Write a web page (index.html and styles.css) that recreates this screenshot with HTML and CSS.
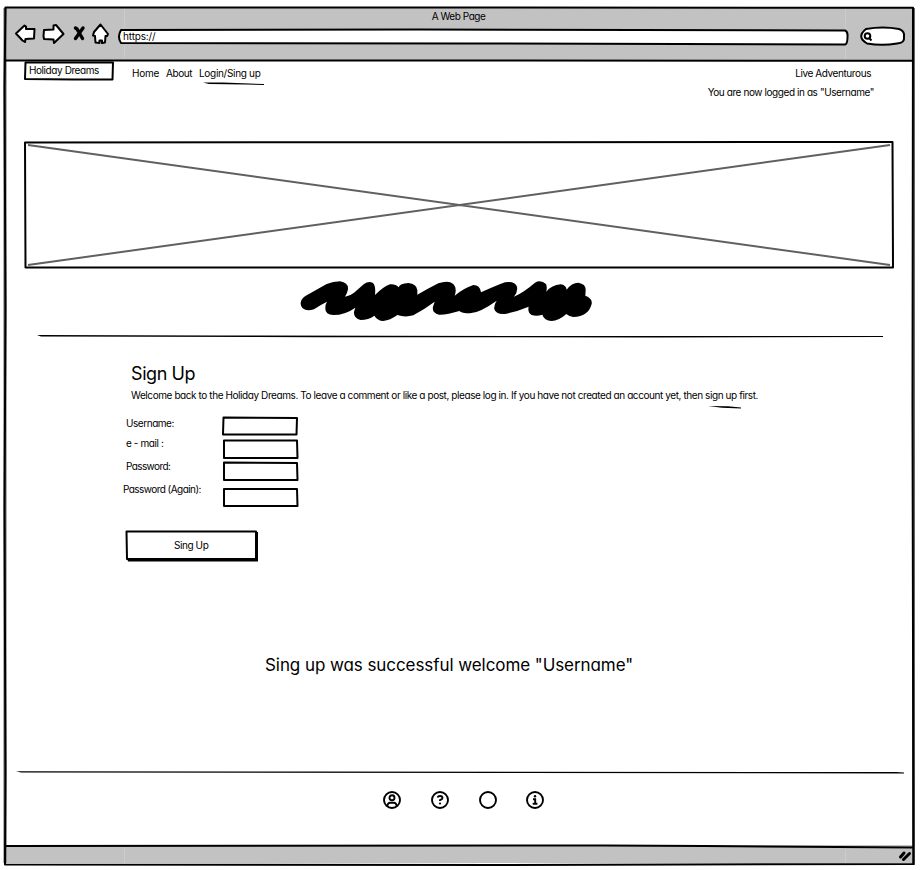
FILE: index.html
```html
<!DOCTYPE html>
<html lang="en">
<head>
<meta charset="utf-8">
<title>Holiday Dreams</title>
<link rel="stylesheet" href="styles.css">
</head>
<body>
<div class="window">
  <header class="chrome">
    <div class="title">A Web Page</div>
    <div class="toolbar">
      <svg class="tools" viewBox="0 0 96 26" width="96" height="26">
        <path class="shape" d="M1 11.500 L9.500 3.500 L11 4.500 V7 H19.500 L19 16.500 L10.500 17 L10 20 L7.500 18.500 Z"/>
        <path class="shape" d="M29 8 L38.500 7.500 V3.500 L41 3 L48.500 12 L39 21 L38.500 17.500 L29 17 L28.500 14 Z"/>
        <path class="cross" d="M60.500 6 L62 7 L67.500 16.500 M68 6 L60.500 16.500"/>
        <path class="shape" d="M85.500 2.500 L93 12 L92 14 H90.500 L90 20.500 L87 21 V18.500 H84.500 V21 L80.500 20.500 L80 14 L78 13.500 L79 10 Z"/>
      </svg>
      <div class="address">
        <svg class="sketch" viewBox="0 0 732 18"><path class="shape" d="M3 2 L300 1.500 L727 2.500 Q730 3.500 729.500 9 Q729.500 16 727 16.500 L350 15.500 L3 15 Q-1 9 3 2Z"/></svg>
        <span>https://</span>
      </div>
      <svg class="search" viewBox="0 0 46 20" width="46" height="20">
        <path class="shape" d="M6 3 Q23 0 39 3 Q45 5 44 11 Q45 17 37 17.500 Q22 20 7 17.500 Q-4 11 6 3Z"/>
        <circle class="shape" cx="7.500" cy="10" r="2.800"/><path class="shape" d="M9 12 L11.500 14.500"/>
      </svg>
    </div>
  </header>

  <nav class="nav">
    <div class="brand">
      <svg class="sketch" viewBox="0 0 90 20"><path class="line" d="M1.500 1.500 L89 1.500 L88.500 18.500 L50 18.500 L1 18 Z"/></svg>
      <span class="t-brand">Holiday Dreams</span>
    </div>
    <span class="t-home">Home</span>
    <span class="t-about">About</span>
    <span class="login"><span class="t-login">Login/Sing up</span>
      <svg class="underline" viewBox="0 0 62 4" width="62" height="4"><path d="M0 .5 L20 .6 L61 2 V3 L42 2.600 L6 2 Z"/></svg>
    </span>
    <div class="status">
      <div class="t-live">Live Adventurous</div>
      <div class="t-user">You are now logged in as "Username"</div>
    </div>
  </nav>

  <main>
    <svg class="banner" viewBox="0 0 870 128" width="870" height="128">
      <path class="diag" d="M4 4 L866 124 M4 124 L866 4"/>
      <path class="line" d="M1 1.500 L868.500 1 L869 126.500 L450 126.500 L1.500 126.500 Z"/>
    </svg>
    <svg class="scribble" viewBox="30 33 876 126" width="292" height="42">
      <path d="M32 98 Q34 85 50 76 L110 42 Q130 34 150 34 Q176 38 174 58 Q172 70 165 80 Q180 78 192 68 L222 42 Q235 32 248 38 Q258 45 255 75 Q280 50 300 43 Q318 42 326 52 Q330 40 355 39 Q380 42 382 60 L382 74 Q410 58 445 40 Q475 30 490 42 Q502 55 494 77 Q520 55 550 45 Q570 45 573 67 Q620 46 645 37 Q675 32 681 50 Q684 65 672 80 Q700 68 735 38 Q752 28 768 42 Q772 50 769 65 Q785 45 812 43 Q828 45 830 59 Q845 38 865 38 Q888 42 887 60 L886 77 Q908 85 905 102 Q895 140 850 141 Q838 140 829 132 Q805 153 785 153 Q762 152 757 134 Q740 140 725 135 Q712 128 716 110 Q680 125 645 132 Q618 134 613 118 Q611 105 620 92 Q570 128 540 130 Q515 130 508 123 Q470 135 447 134 Q425 128 429 110 L434 95 Q400 120 370 136 Q345 143 322 135 Q300 151 280 153 Q262 152 253 137 Q235 150 212 150 Q190 145 192 125 L196 113 Q165 135 130 135 Q105 134 106 115 Q106 102 111 95 Q90 105 72 118 Q50 125 38 115 Q31 108 32 98Z"/>
    </svg>
    <svg class="rule top" viewBox="0 0 846 4" width="846" height="4"><path d="M0 0 L180 .4 L500 1 L846 1 V2 L620 2.500 L280 2.200 L4 1.400 Z"/></svg>

    <section class="signup">
      <h1>Sign Up</h1>
      <p class="welcome">Welcome back to the Holiday Dreams. To leave a comment or like a post, please log in. If you have not created an account yet, then sign up first.
        <svg class="underline" viewBox="0 0 34 4" width="34" height="4"><path d="M0 0 L20 .2 L33 1.500 V2.500 L14 1.800 Z"/></svg>
      </p>
      <form class="fields">
        <label class="t-name">Username:</label>
        <div class="field"><svg class="sketch" viewBox="0 0 76 20"><path class="line" d="M1.500 1.500 L75 2 L74.500 18.500 L1 18.500 Z"/></svg></div>
        <label class="t-mail">e - mail :</label>
        <div class="field"><svg class="sketch" viewBox="0 0 76 20"><path class="line" d="M2 1.500 L75 1.500 L75.500 19 L2 19 Z"/></svg></div>
        <label class="t-pass">Password:</label>
        <div class="field"><svg class="sketch" viewBox="0 0 76 20"><path class="line" d="M2 1.500 L75 2 L75.500 19 L2 19 Z"/></svg></div>
        <label class="t-again">Password (Again):</label>
        <div class="field"><svg class="sketch" viewBox="0 0 76 20"><path class="line" d="M2 2 L75 2 L75.500 19 L2 19 Z"/></svg></div>
      </form>
      <div class="button">
        <svg class="sketch" viewBox="0 0 134 32"><path d="M2 28 H130 V2 L133 2 L133 31.500 L3 31.500 Z"/><path class="shape" d="M1.500 1.500 L131 1.500 L131 29 L2 29 Z"/></svg>
        <span class="t-button">Sing Up</span>
      </div>
    </section>

    <p class="success">Sing up was successful welcome "Username"</p>
  </main>

  <footer>
    <svg class="rule" viewBox="0 0 888 4" width="888" height="4"><path d="M0 .3 L300 .5 L880 1 L888 1.500 V2.500 L500 2 L5 1.500 Z"/></svg>
    <div class="icons">
      <svg viewBox="0 0 20 20" width="20" height="20"><circle class="icon" cx="10" cy="10" r="8"/><circle class="icon" cx="10" cy="7.700" r="2.500"/><path class="icon" d="M5.200 16 Q6 12.800 8 12.800 H12 Q14 12.800 14.800 16"/></svg>
      <svg viewBox="0 0 20 20" width="20" height="20"><circle class="icon" cx="10" cy="10" r="8"/><path class="icon" d="M7.500 7.500 Q8 6 10 6 Q12.500 6 12.500 8 Q12.500 9.200 10 10.200 V11"/><circle cx="10" cy="13.500" r="1.100"/></svg>
      <svg viewBox="0 0 20 20" width="20" height="20"><circle class="icon" cx="10" cy="10" r="8"/></svg>
      <svg class="info" viewBox="0 0 20 20" width="20" height="20"><circle class="icon" cx="10" cy="10" r="8"/><circle cx="10" cy="6.300" r="1.200"/><path class="icon" d="M8 9.300 H10.200 V13.500 M7.700 13.800 H12.400"/></svg>
    </div>
    <div class="bottom">
      <svg viewBox="0 0 14 12" width="14" height="12"><path class="grip" d="M2.500 7 L6 3 M5.500 9.500 L11.500 3.500"/></svg>
    </div>
  </footer>

  <svg class="frame" viewBox="0 0 912 860" width="912" height="860">
    <path class="soft" d="M1 1 V856 M909.500 1 V858"/>
    <path class="line" d="M1.500 .5 L500 .5 L909 .7 L908.500 400 L909.500 857 L500 858 L1 857.500 L1.500 766 L.5 500 L1.500 300 L.5 80 Z M1 53.500 L450 53.500 L909 53.700 M1 839 L600 838.500 L700 839 L909 840.500"/>
    <path class="seam" d="M120.500 2 V21 M120.500 39 V52 M841.500 2 V22 M841.500 40 V52 M120.500 841 V856 M841.500 842 V856"/>
  </svg>
</div>
</body>
</html>
```
FILE: styles.css
```css
* { box-sizing: border-box; }
body { margin: 0; background: #fff; color: #000; font: 10px/12px Inter, "Liberation Sans", sans-serif; font-feature-settings: "cv11"; letter-spacing: -0.415px; overflow: hidden; }
h1, p { margin: 0; font-weight: 400; }
svg { display: block; overflow: visible; }
span, label, h1, p, .t-live, .t-user, .title { white-space: nowrap; }

.window { position: relative; width: 912px; height: 860px; margin: 7px 0 0 4px; display: flex; flex-direction: column; }
.frame { position: absolute; inset: 0; pointer-events: none; }
.sketch { position: absolute; inset: 0; width: 100%; height: 100%; }
.shape { fill: #fff; stroke: #000; stroke-width: 2; stroke-linejoin: round; }
.line { fill: none; stroke: #000; stroke-width: 2; stroke-linejoin: round; }
.cross { fill: none; stroke: #000; stroke-width: 3.4; stroke-linecap: round; }
.soft { fill: none; stroke: #666; stroke-width: 3; }
.seam { stroke: #ccc; stroke-width: 1; }
.diag { fill: none; stroke: #606060; stroke-width: 2; }

.chrome { width: 909px; height: 54px; background: #c2c2c2; }
.title { padding-top: 3px; height: 16px; text-align: center; letter-spacing: -0.45px; }
.toolbar { display: flex; align-items: flex-start; padding-left: 11px; }
.tools { flex: none; margin-top: -1px; }
.address { position: relative; width: 732px; height: 18px; margin: 5px 0 0 7px; padding: 2px 0 0 5px; letter-spacing: -0.15px; }
.address span { position: relative; }
.search { margin: 3px 0 0 10px; }

.nav { display: flex; align-items: flex-start; height: 80px; padding: 0 40px 0 20px; }
.brand { position: relative; width: 90px; height: 20px; margin: 0 18px 0 0; padding: 3px 0 0 5px; }
.brand span { position: relative; }
.t-home, .t-about, .login, .status { margin-top: 6px; }
.t-home { width: 34px; letter-spacing: -0.2px; }
.t-about { width: 33px; letter-spacing: -0.4px; }
.login { position: relative; letter-spacing: -0.3px; }
.login .underline { position: absolute; left: 4px; top: 15px; }
.status { margin-left: auto; text-align: right; margin-right: 2px; }
.t-live { margin: 0 3px 7px 0; }

main { flex: none; height: 630px; }
.banner { margin-left: 20px; }
.scribble { margin: 12px 0 0 296px; }
.rule.top { margin: 12px 0 0 33px; }
.signup { padding: 23px 0 0 127px; }
h1 { font-size: 18px; line-height: 24px; letter-spacing: -0.42px; }
.welcome { position: relative; margin-top: 3px; }
.welcome .underline { position: absolute; left: 577px; top: 17px; }
.fields { display: grid; grid-template-columns: 96px 76px; margin: 15px 0 0 -5px; grid-template-rows: 23px 22px 26px 22px; }
.field { position: relative; width: 76px; height: 20px; }
.t-name { margin-top: 1px; letter-spacing: -0.45px; }
.t-mail { margin-top: -2px; letter-spacing: -0.4px; }
.t-pass { margin-top: -1px; letter-spacing: -0.6px; }
.t-again { margin: -4px 0 0 -3px; letter-spacing: -0.55px; }
.button { position: relative; width: 134px; height: 32px; margin: 21px 0 0 -6px; padding: 9px 0 0 49px; }
.button span { position: relative; }
.success { width: 368px; margin: 91px 0 0 261px; font-size: 17px; line-height: 24px; letter-spacing: -0.07px; }

footer { width: 909px; flex: none; }
footer .rule { margin-left: 12px; }
.icons { display: flex; justify-content: flex-start; gap: 28px; margin: 15px 0 0 378px; }
.info { margin-left: -1px; }
.icon { fill: none; stroke: #000; stroke-width: 1.9; }
.bottom { display: flex; justify-content: flex-end; height: 18px; margin-top: 35px; padding: 5px 1px 0; background: #c2c2c2; }
.grip { stroke: #000; stroke-width: 3; stroke-linecap: round; }
```
